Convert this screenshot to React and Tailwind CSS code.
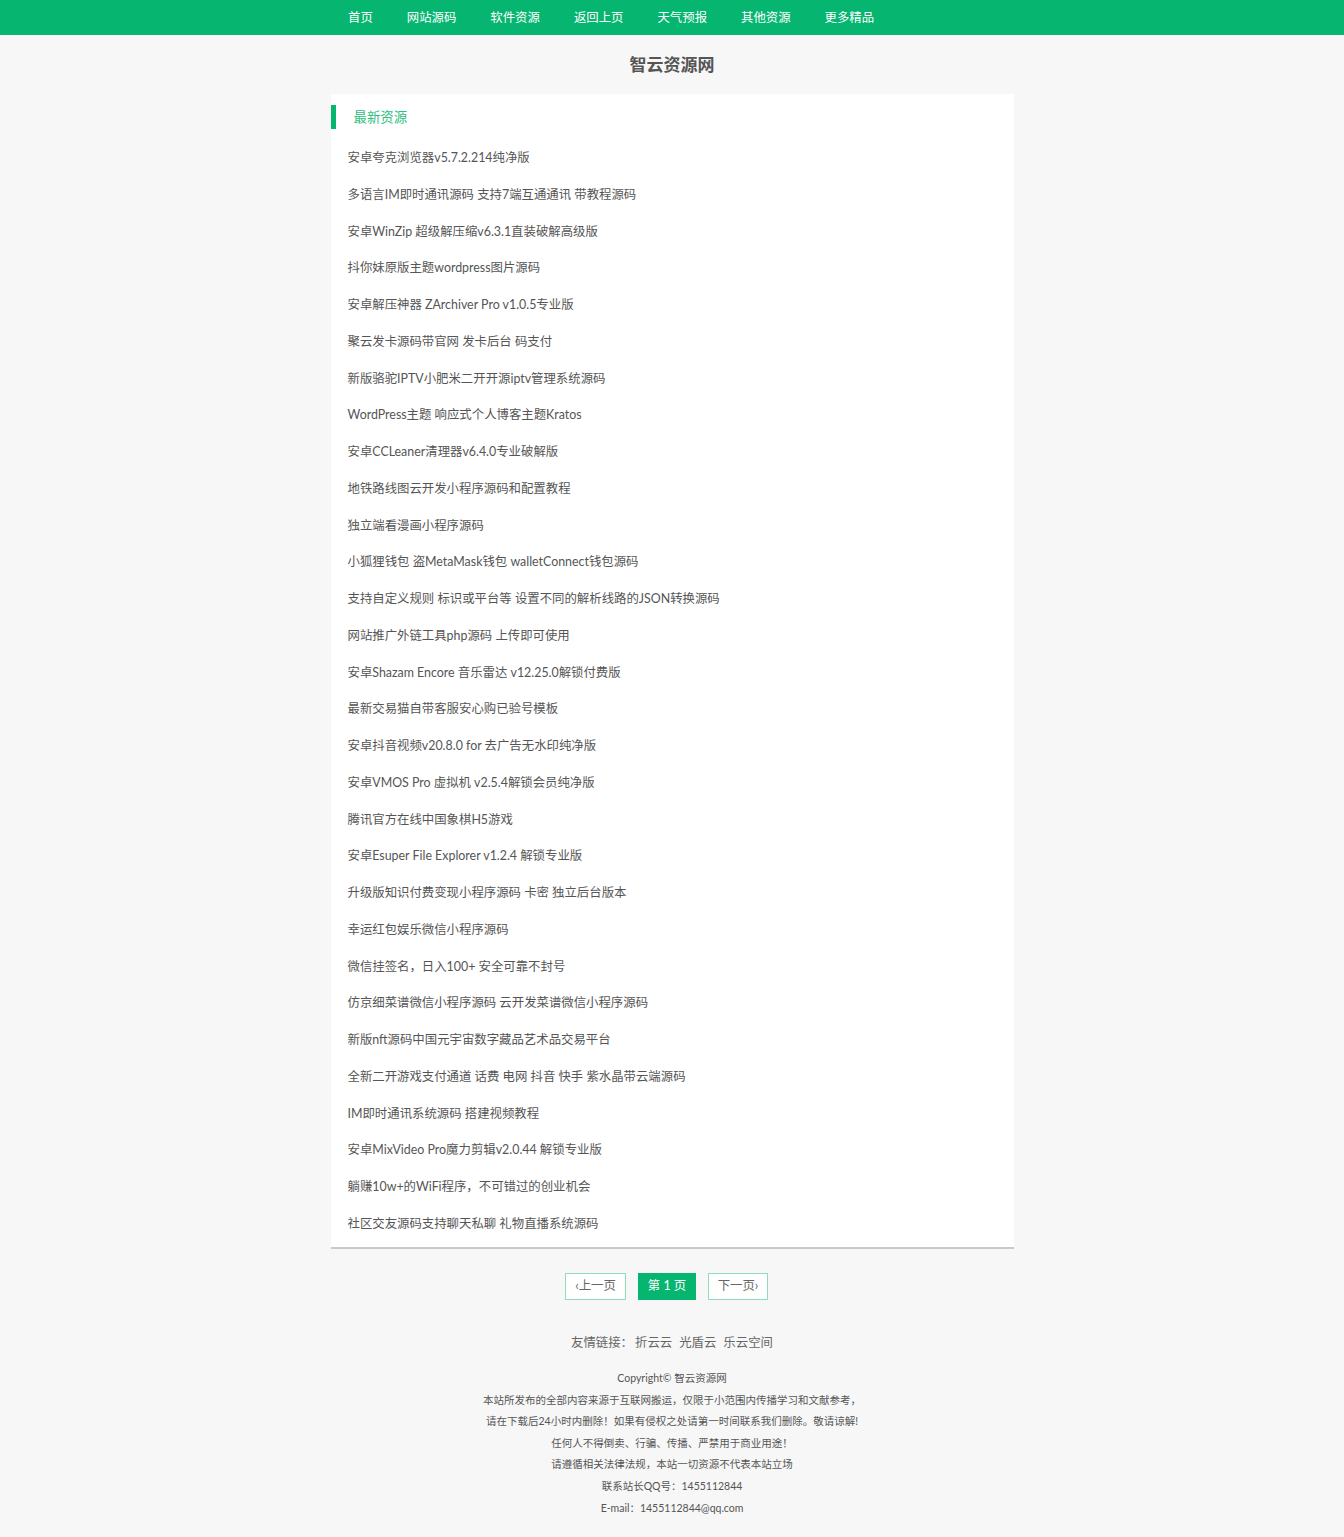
const navItems = ['首页', '网站源码', '软件资源', '返回上页', '天气预报', '其他资源', '更多精品']

const items = [
  '安卓夸克浏览器v5.7.2.214纯净版',
  '多语言IM即时通讯源码 支持7端互通通讯 带教程源码',
  '安卓WinZip 超级解压缩v6.3.1直装破解高级版',
  '抖你妹原版主题wordpress图片源码',
  '安卓解压神器 ZArchiver Pro v1.0.5专业版',
  '聚云发卡源码带官网 发卡后台 码支付',
  '新版骆驼IPTV小肥米二开开源iptv管理系统源码',
  'WordPress主题 响应式个人博客主题Kratos',
  '安卓CCLeaner清理器v6.4.0专业破解版',
  '地铁路线图云开发小程序源码和配置教程',
  '独立端看漫画小程序源码',
  '小狐狸钱包 盗MetaMask钱包 walletConnect钱包源码',
  '支持自定义规则 标识或平台等 设置不同的解析线路的JSON转换源码',
  '网站推广外链工具php源码 上传即可使用',
  '安卓Shazam Encore 音乐雷达 v12.25.0解锁付费版',
  '最新交易猫自带客服安心购已验号模板',
  '安卓抖音视频v20.8.0 for 去广告无水印纯净版',
  '安卓VMOS Pro 虚拟机 v2.5.4解锁会员纯净版',
  '腾讯官方在线中国象棋H5游戏',
  '安卓Esuper File Explorer v1.2.4 解锁专业版',
  '升级版知识付费变现小程序源码 卡密 独立后台版本',
  '幸运红包娱乐微信小程序源码',
  '微信挂签名，日入100+ 安全可靠不封号',
  '仿京细菜谱微信小程序源码 云开发菜谱微信小程序源码',
  '新版nft源码中国元宇宙数字藏品艺术品交易平台',
  '全新二开游戏支付通道 话费 电网 抖音 快手 紫水晶带云端源码',
  'IM即时通讯系统源码 搭建视频教程',
  '安卓MixVideo Pro魔力剪辑v2.0.44 解锁专业版',
  '躺赚10w+的WiFi程序，不可错过的创业机会',
  '社区交友源码支持聊天私聊 礼物直播系统源码',
]

const footer = [
  'Copyright© 智云资源网',
  '本站所发布的全部内容来源于互联网搬运，仅限于小范围内传播学习和文献参考，',
  '请在下载后24小时内删除！如果有侵权之处请第一时间联系我们删除。敬请谅解!',
  '任何人不得倒卖、行骗、传播、严禁用于商业用途！',
  '请遵循相关法律法规，本站一切资源不代表本站立场',
  '联系站长QQ号：1455112844',
  'E-mail：1455112844@qq.com',
]

export default function App() {
  return (
    <div
      className="min-h-[1537px] bg-[#f7f7f7] text-[#555]"
      style={{ fontFamily: 'Lato, "Noto Sans CJK SC", sans-serif' }}
    >
      <div className="h-[35px] bg-[#05b570]">
        <div className="mx-auto flex h-full w-[684px] items-center pt-[2px]">
          {navItems.map((n) => (
            <a key={n} className="px-[17px] text-[12.4px] text-white first:pl-[18px]">
              {n}
            </a>
          ))}
        </div>
      </div>

      <h1 className="pt-[17px] text-center text-[17px] font-bold leading-[26px] text-[#555]">
        智云资源网
      </h1>

      <div className="mx-auto mt-[16px] w-[683px] border-b-2 border-[#c9c9c9] bg-white pb-[4px] pt-[11px]">
        <div className="flex h-[24px] items-center border-l-[5px] border-[#05b570] pl-[18px] text-[13.4px] text-[#2fbf80]">
          最新资源
        </div>
        <ul className="mt-[11px] pl-[17px]">
          {items.map((t) => (
            <li key={t} className="flex h-[36.75px] items-center text-[12.4px] text-[#555]">
              {t}
            </li>
          ))}
        </ul>
      </div>

      <div className="mt-[24px] flex justify-center gap-[12px] pr-[11px] text-[12.4px]">
        <a className="flex h-[27px] w-[61px] items-center justify-center border border-[#8fdcb8] bg-white text-[#666]">
          ‹上一页
        </a>
        <a className="flex h-[27px] w-[58px] items-center justify-center border border-[#05b570] bg-[#05b570] text-white">
          第 1 页
        </a>
        <a className="flex h-[27px] w-[60px] items-center justify-center border border-[#8fdcb8] bg-white text-[#666]">
          下一页›
        </a>
      </div>

      <div className="mt-[34px] text-center text-[12.4px] text-[#666]">
        友情链接：<span className="ml-[2px]">折云云</span>
        <span className="ml-[7px]">光盾云</span>
        <span className="ml-[7px]">乐云空间</span>
      </div>

      <div className="mt-[16px] text-center text-[10.5px] leading-[21.6px] text-[#555]">
        {footer.map((f) => (
          <p key={f}>{f}</p>
        ))}
      </div>
    </div>
  )
}
